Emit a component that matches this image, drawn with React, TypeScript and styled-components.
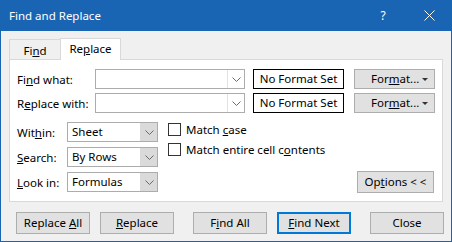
import styled, { createGlobalStyle } from "styled-components";

const GlobalStyle = createGlobalStyle`
  html, body {
    margin: 0;
    padding: 0;
    background: #f0f0f0;
  }
  * {
    box-sizing: border-box;
  }
`;

const Window = styled.div`
  width: 452px;
  height: 242px;
  display: flex;
  flex-direction: column;
  background: #f0f0f0;
  border: 1px solid #1a65b3;
  border-top: none;
  font-family: "Noto Sans", "Open Sans", sans-serif;
  font-size: 11.5px;
  color: #000;
  overflow: hidden;
`;

const TitleBar = styled.div`
  height: 31px;
  margin: 0 -1px;
  background: #1a65b3;
  color: #fff;
  display: flex;
  align-items: center;
  padding-left: 9px;
  font-size: 11.5px;
`;

const Title = styled.div`
  flex: 1;
`;

const TitleButton = styled.div`
  width: 46px;
  height: 31px;
  display: flex;
  align-items: center;
  justify-content: center;
  font-size: 12px;
`;

const TabRow = styled.div`
  display: flex;
  align-items: flex-end;
  padding: 7px 0 0 8px;
  height: 28px;
`;

const Tab = styled.div<{ $active?: boolean }>`
  height: ${(p) => (p.$active ? "22px" : "20px")};
  width: ${(p) => (p.$active ? "61px" : "51px")};
  text-align: center;
  line-height: 20px;
  background: ${(p) => (p.$active ? "#fff" : "#f0f0f0")};
  border: 1px solid #d9d9d9;
  border-bottom: none;
  margin-bottom: ${(p) => (p.$active ? "-1px" : "0")};
  position: relative;
  z-index: ${(p) => (p.$active ? 2 : 1)};
  ${(p) => (p.$active ? "" : "border-right: none; padding-top: 1px;")}
`;

const Panel = styled.div`
  margin: 0 8px;
  height: 143px;
  background: #fff;
  border: 1px solid #d9d9d9;
  padding: 9px 8px 0 7px;
  display: flex;
  flex-direction: column;
`;

const FieldRow = styled.div<{ $last?: boolean }>`
  display: flex;
  align-items: center;
  height: 20px;
  margin-bottom: ${(p) => (p.$last ? 0 : 4)}px;
`;

const Label = styled.div<{ $w: number }>`
  width: ${(p) => p.$w}px;
  flex-shrink: 0;
  white-space: nowrap;
`;

const Combo = styled.div<{ $w: number }>`
  width: ${(p) => p.$w}px;
  height: 20px;
  border: 1px solid #acacac;
  background: #fff;
  display: flex;
  align-items: stretch;
  flex-shrink: 0;
`;

const ComboText = styled.div`
  flex: 1;
  padding-left: 4px;
  line-height: 18px;
`;

const ComboArrow = styled.div<{ $filled?: boolean }>`
  width: 17px;
  background: ${(p) => (p.$filled ? "#dadada" : "#fff")};
  border-left: 1px solid ${(p) => (p.$filled ? "#dadada" : "#e3e3e3")};
  display: flex;
  align-items: center;
  justify-content: center;
`;

const NoFormat = styled.div`
  width: 91px;
  height: 20px;
  margin-left: 8px;
  border: 1px solid #000;
  text-align: center;
  line-height: 18px;
  flex-shrink: 0;
  white-space: nowrap;
`;

const Button = styled.div<{ $w: number; $h?: number; $default?: boolean }>`
  width: ${(p) => p.$w}px;
  height: ${(p) => p.$h ?? 22}px;
  line-height: ${(p) => (p.$h ?? 22) - (p.$default ? 4 : 2)}px;
  background: #e1e1e1;
  border: ${(p) => (p.$default ? "2px solid #0078d7" : "1px solid #adadad")};
  text-align: center;
  white-space: nowrap;
  flex-shrink: 0;
  position: relative;
`;

const FormatButton = styled(Button)`
  margin-left: 10px;
  text-align: left;
  padding-left: 16px;
`;

const Caret = styled.span`
  position: absolute;
  right: 6px;
  top: 8px;
  width: 0;
  height: 0;
  border-left: 3px solid transparent;
  border-right: 3px solid transparent;
  border-top: 3px solid #333;
`;

const OptionsArea = styled.div`
  display: flex;
  margin-top: 5px;
`;

const SelectColumn = styled.div`
  display: flex;
  flex-direction: column;
  gap: 5px;
`;

const CheckColumn = styled.div`
  margin-left: 10px;
  padding-top: 1px;
  display: flex;
  flex-direction: column;
  gap: 7px;
`;

const CheckRow = styled.div`
  display: flex;
  align-items: center;
  height: 13px;
  white-space: pre;
`;

const Box = styled.span`
  width: 13px;
  height: 13px;
  border: 1px solid #333;
  background: #fff;
  margin-right: 5px;
  flex-shrink: 0;
`;

const OptionsSide = styled.div`
  flex: 1;
  display: flex;
  align-items: flex-end;
  justify-content: flex-end;
`;

const Footer = styled.div`
  display: flex;
  padding: 10px 0 0 15px;
`;

const Spacer = styled.div<{ $w: number }>`
  width: ${(p) => p.$w}px;
  flex-shrink: 0;
`;

function Chevron() {
  return (
    <svg width="9" height="5" viewBox="0 0 9 5">
      <path d="M0.5 0.5 L4.5 4.5 L8.5 0.5" fill="none" stroke="#6a6a6a" strokeWidth="1" />
    </svg>
  );
}

function Close() {
  return (
    <svg width="11" height="11" viewBox="0 0 11 11">
      <path d="M0.5 0.5 L10.5 10.5 M10.5 0.5 L0.5 10.5" stroke="#fff" strokeWidth="1" />
    </svg>
  );
}

function Select({ value }: { value: string }) {
  return (
    <Combo $w={91}>
      <ComboText>{value}</ComboText>
      <ComboArrow $filled>
        <Chevron />
      </ComboArrow>
    </Combo>
  );
}

function SearchField() {
  return (
    <>
      <Combo $w={150}>
        <ComboText />
        <ComboArrow>
          <Chevron />
        </ComboArrow>
      </Combo>
      <NoFormat>No Format Set</NoFormat>
      <FormatButton $w={81} $h={20}>
        For<u>m</u>at...
        <Caret />
      </FormatButton>
    </>
  );
}

export default function App() {
  return (
    <>
      <GlobalStyle />
      <Window>
        <TitleBar>
          <Title>Find and Replace</Title>
          <TitleButton>?</TitleButton>
          <TitleButton>
            <Close />
          </TitleButton>
        </TitleBar>
        <TabRow>
          <Tab>
            Fi<u>n</u>d
          </Tab>
          <Tab $active>
            Re<u>p</u>lace
          </Tab>
        </TabRow>
        <Panel>
          <FieldRow>
            <Label $w={78}>
              Fi<u>n</u>d what:
            </Label>
            <SearchField />
          </FieldRow>
          <FieldRow>
            <Label $w={78}>
              R<u>e</u>place with:
            </Label>
            <SearchField />
          </FieldRow>
          <OptionsArea>
            <SelectColumn>
              <FieldRow $last>
                <Label $w={50}>
                  Wit<u>h</u>in:
                </Label>
                <Select value="Sheet" />
              </FieldRow>
              <FieldRow $last>
                <Label $w={50}>
                  <u>S</u>earch:
                </Label>
                <Select value="By Rows" />
              </FieldRow>
              <FieldRow $last>
                <Label $w={50}>
                  <u>L</u>ook in:
                </Label>
                <Select value="Formulas" />
              </FieldRow>
            </SelectColumn>
            <CheckColumn>
              <CheckRow>
                <Box />
                <span>
                  Match <u>c</u>ase
                </span>
              </CheckRow>
              <CheckRow>
                <Box />
                <span>
                  Match entire cell c<u>o</u>ntents
                </span>
              </CheckRow>
            </CheckColumn>
            <OptionsSide>
              <Button $w={77} $h={22} style={{ marginBottom: -1 }}>
                Op<u>t</u>ions &lt; &lt;
              </Button>
            </OptionsSide>
          </OptionsArea>
        </Panel>
        <Footer>
          <Button $w={74}>
            Replace <u>A</u>ll
          </Button>
          <Spacer $w={10} />
          <Button $w={74}>
            <u>R</u>eplace
          </Button>
          <Spacer $w={19} />
          <Button $w={74}>
            F<u>i</u>nd All
          </Button>
          <Spacer $w={10} />
          <Button $w={74} $default>
            <u>F</u>ind Next
          </Button>
          <Spacer $w={19} />
          <Button $w={74}>Close</Button>
        </Footer>
      </Window>
    </>
  );
}
